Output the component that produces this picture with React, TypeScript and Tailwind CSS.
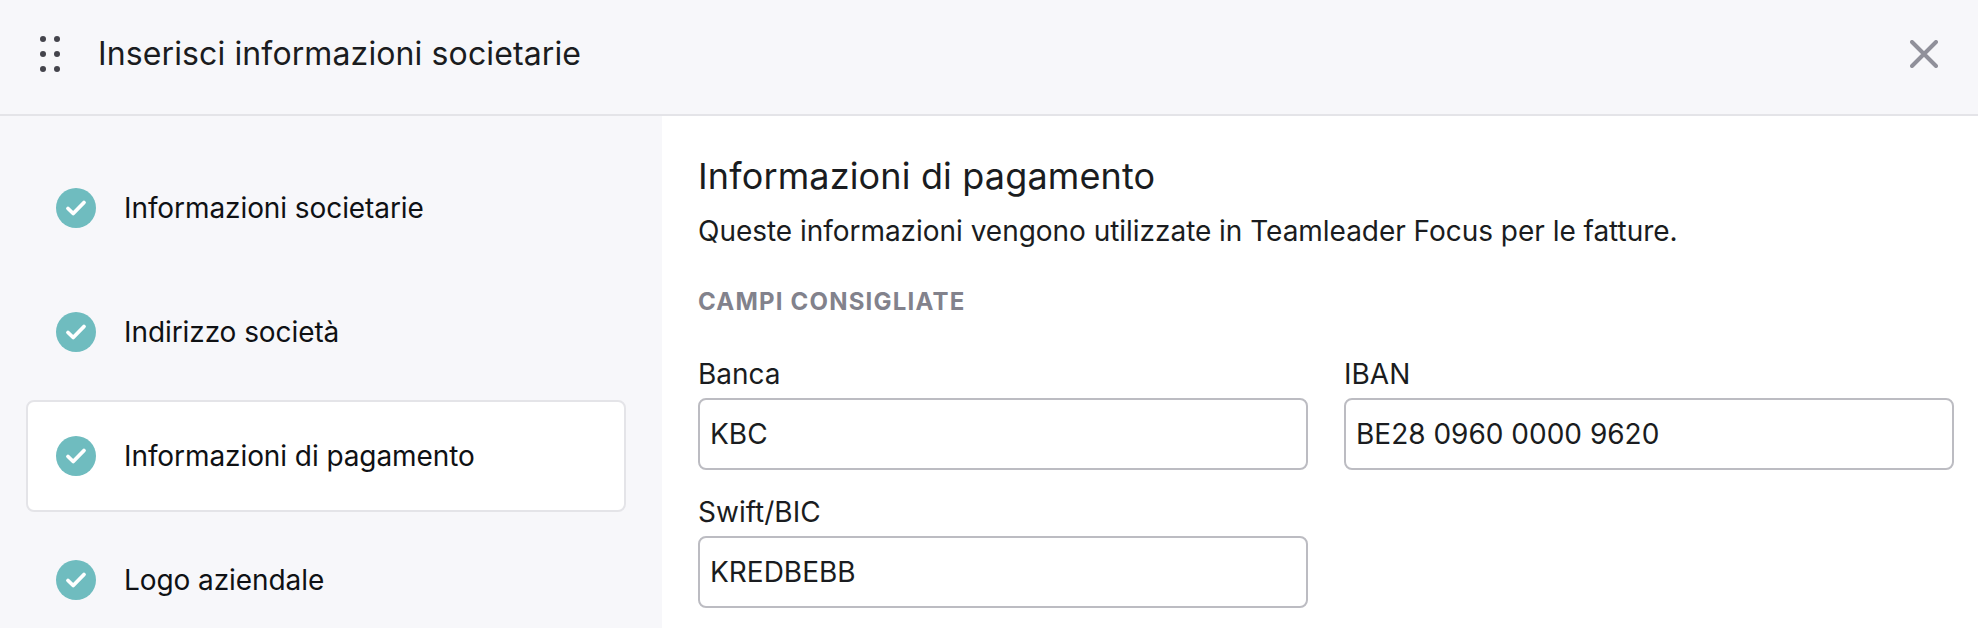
const steps = ["Informazioni societarie", "Indirizzo società", "Informazioni di pagamento", "Logo aziendale"];

const CheckCircle = () => (
  <svg className="size-10 shrink-0" viewBox="0 0 40 40">
    <circle cx="20" cy="20" r="20" fill="#6fbcbf" />
    <path d="M12 20.5l5.2 5 10.8-11" fill="none" stroke="#fff" strokeWidth="3.8" strokeLinecap="round" strokeLinejoin="round" />
  </svg>
);

const Field = ({ label, value }: { label: string; value: string }) => (
  <div className="flex flex-col">
    <label className="h-[39px] text-[28px] leading-[30px] text-[#1a1c20]">{label}</label>
    <div className="flex h-[72px] items-center rounded-[8px] border-2 border-[#bcbcc2] bg-white pl-[10px] text-[28px] text-[#1a1c20]">
      {value}
    </div>
  </div>
);

export default function App() {
  return (
    <div className="flex h-screen flex-col overflow-hidden bg-white font-['Inter',sans-serif]">
      <header className="flex h-[116px] shrink-0 items-center justify-between border-b-2 border-[#e4e4e8] bg-[#f7f7fa] pb-[6px] pl-[40px] pr-[40px]">
        <div className="flex items-center gap-[38px]">
          <svg className="h-[36px] w-[20px]" viewBox="0 0 20 36" fill="#44444c">
            <circle cx="3" cy="3" r="3" />
            <circle cx="17" cy="3" r="3" />
            <circle cx="3" cy="18" r="3" />
            <circle cx="17" cy="18" r="3" />
            <circle cx="3" cy="33" r="3" />
            <circle cx="17" cy="33" r="3" />
          </svg>
          <h1 className="text-[32px] font-normal tracking-[0.12px] text-[#1a1c20]">Inserisci informazioni societarie</h1>
        </div>
        <svg className="size-[28px]" viewBox="0 0 28 28" fill="none" stroke="#90909a" strokeWidth="4" strokeLinecap="round">
          <path d="M2 2l24 24M26 2L2 26" />
        </svg>
      </header>
      <div className="flex flex-1">
        <aside className="w-[662px] shrink-0 bg-[#f7f7fa] pl-[26px] pr-[36px] pt-[36px]">
          <div className="flex flex-col gap-[12px]">
            {steps.map((step, idx) => (
              <div
                key={idx}
                className={
                  idx === 2
                    ? "flex h-[112px] items-center gap-[28px] rounded-[8px] border-2 border-[#e4e4e8] bg-white pl-[28px]"
                    : "flex h-[112px] items-center gap-[28px] border-2 border-transparent pl-[28px]"
                }
              >
                <CheckCircle />
                <span className="text-[28px] tracking-[-0.08px] text-[#0f1114]">{step}</span>
              </div>
            ))}
          </div>
        </aside>
        <main className="flex-1 pl-[36px] pt-[38px]">
          <h2 className="text-[36px] leading-[44px] font-normal tracking-[0.15px] text-[#1a1c20]">Informazioni di pagamento</h2>
          <p className="mt-[15px] text-[28px] leading-[36px] tracking-[-0.03px] text-[#1a1c20]">
            Queste informazioni vengono utilizzate in Teamleader Focus per le fatture.
          </p>
          <h3 className="mt-[37px] text-[24px] leading-[32px] font-bold tracking-[1.2px] text-[#82828c]">CAMPI CONSIGLIATE</h3>
          <div className="mt-[41px] grid grid-cols-[610px_610px] gap-x-[36px] gap-y-[27px]">
            <Field label="Banca" value="KBC" />
            <Field label="IBAN" value="BE28 0960 0000 9620" />
            <Field label="Swift/BIC" value="KREDBEBB" />
          </div>
        </main>
      </div>
    </div>
  );
}
